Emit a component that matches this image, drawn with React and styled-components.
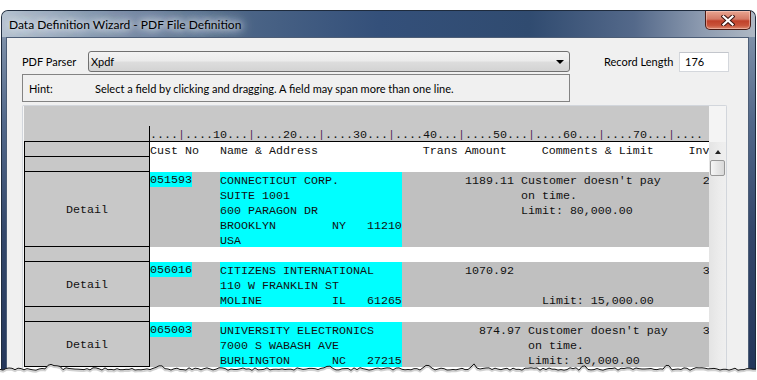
import React from 'react';
import styled, { createGlobalStyle } from 'styled-components';

const GlobalStyle = createGlobalStyle`
  html, body {
    margin: 0;
    padding: 0;
    background: #fff;
    overflow: hidden;
  }
  body {
    font-family: Lato, "Noto Sans", sans-serif;
    font-size: 11px;
    color: #000;
  }
`;

const RULER = '....|....10...|....20...|....30...|....40...|....50...|....60...|....70...|....';
const HEADER = 'Cust No   Name & Address               Trans Amount     Comments & Limit     Inv';

const records = [
  {
    id: '051593',
    name: ['CONNECTICUT CORP.', 'SUITE 1001', '600 PARAGON DR', 'BROOKLYN        NY   11210', 'USA'],
    rest: [
      "         1189.11 Customer doesn't pay      2",
      '                 on time.',
      '                 Limit: 80,000.00',
      '',
      '',
    ],
  },
  {
    id: '056016',
    name: ['CITIZENS INTERNATIONAL', '110 W FRANKLIN ST', 'MOLINE          IL   61265'],
    rest: [
      '         1070.92                           3',
      '',
      '                    Limit: 15,000.00',
    ],
  },
  {
    id: '065003',
    name: ['UNIVERSITY ELECTRONICS', '7000 S WABASH AVE', 'BURLINGTON      NC   27215'],
    rest: [
      "           874.97 Customer doesn't pay     3",
      '                  on time.',
      '                  Limit: 10,000.00',
    ],
  },
];

// jagged torn-paper edge along the bottom
const tornPoints = (() => {
  let s = 11;
  const rand = () => {
    s = (s * 9301 + 49297) % 233280;
    return s / 233280;
  };
  const spikes = [[50, 6], [57, 4], [160, 4], [330, 4], [427, 5], [474, 4], [584, 3], [667, 5]];
  const pts = [];
  for (let x = 0; x <= 757; x += 3) {
    let y = 13 + (rand() - 0.5) * 2.6;
    spikes.forEach(([sx, h]) => {
      const d = Math.abs(x - sx);
      if (d < 5) y -= h * (1 - d / 5);
    });
    pts.push([x, y]);
  }
  return pts;
})();

const TornEdge = () => {
  const line = tornPoints.map(([x, y], i) => `${i ? 'L' : 'M'}${x},${y.toFixed(1)}`).join(' ');
  return (
    <TornSvg width="757" height="24" viewBox="0 0 757 24">
      <path d={`${line} L757,24 L0,24 Z`} fill="#fff" />
      <path d={line} fill="none" stroke="rgba(0,0,0,0.18)" strokeWidth="2" transform="translate(0,1.5)" />
      <path d={line} fill="none" stroke="#111" strokeWidth="1" />
    </TornSvg>
  );
};

const Ruler = () => (
  <RulerText>
    {RULER.split('').map((c, i) => (c === '|' ? <Pipe key={i}>|</Pipe> : c))}
  </RulerText>
);

const App = () => {
  return (
    <Page>
      <GlobalStyle />
      <Window>
        <TitleBar>
          <Title>Data Definition Wizard - PDF File Definition</Title>
          <CloseButton>
            <svg width="14" height="11" viewBox="0 0 14 11">
              <path d="M2.5 1.5 L11.5 9.5 M11.5 1.5 L2.5 9.5" stroke="#3a1410" strokeWidth="4.2" strokeLinecap="square" />
              <path d="M2.5 1.5 L11.5 9.5 M11.5 1.5 L2.5 9.5" stroke="#fff" strokeWidth="2.2" strokeLinecap="square" />
            </svg>
          </CloseButton>
        </TitleBar>
        <Client>
          <TopRow>
            <FieldLabel>PDF Parser</FieldLabel>
            <Combo>
              <span>Xpdf</span>
              <ComboArrow />
            </Combo>
            <RecordLabel>Record Length</RecordLabel>
            <NumberBox>176</NumberBox>
          </TopRow>
          <HintBox>
            <HintLabel>Hint:</HintLabel>
            <span>Select a field by clicking and dragging. A field may span more than one line.</span>
          </HintBox>
          <Panel>
            <Viewport>
              <RulerHead>
                <RulerCorner />
                <Ruler />
              </RulerHead>
              <Row lines={1}>
                <LeftCell />
                <DataCell>
                  <RestField>{HEADER}</RestField>
                </DataCell>
              </Row>
              <Row lines={1}>
                <LeftCell />
                <DataCell />
              </Row>
              {records.map((r, i) => (
                <React.Fragment key={r.id}>
                  {i > 0 && (
                    <Row lines={1}>
                      <LeftCell />
                      <DataCell />
                    </Row>
                  )}
                  <Row lines={r.name.length}>
                    <LeftCell>Detail</LeftCell>
                    <DataCell record>
                      <IdField>
                        <IdMark>{r.id}</IdMark>
                      </IdField>
                      <NameField>{r.name.join('\n')}</NameField>
                      <RestField>{r.rest.join('\n')}</RestField>
                    </DataCell>
                  </Row>
                </React.Fragment>
              ))}
            </Viewport>
            <ScrollCol>
              <ScrollCap />
              <ScrollTrack>
                <ScrollArrow />
                <ScrollThumb />
              </ScrollTrack>
            </ScrollCol>
          </Panel>
        </Client>
      </Window>
      <TornEdge />
    </Page>
  );
};

export default App;

const Page = styled.div`
  position: relative;
  width: 757px;
  height: 380px;
  overflow: hidden;
  padding-top: 10px;
  box-sizing: border-box;
`;

const Window = styled.div`
  margin-left: 1px;
  width: 755px;
  height: 370px;
  box-sizing: border-box;
  border: 1px solid #1e2b3d;
  border-bottom: none;
  border-radius: 7px 7px 0 0;
  background: linear-gradient(180deg, #8b9cb1 0%, #52688a 30%, #33476a 60%, #24365a 100%);
  padding: 0 6px 0 4px;
  display: flex;
  flex-direction: column;
`;

const TitleBar = styled.div`
  height: 26px;
  margin: 0 -6px 0 -4px;
  padding: 0 4px 0 7px;
  border-radius: 6px 6px 0 0;
  display: flex;
  align-items: flex-start;
  justify-content: space-between;
  background: linear-gradient(90deg, #b4c1cf 0%, #8396ae 12%, #4e6788 30%, #34507a 50%, #304b70 70%, #54698a 84%, #8d9bb0 93%, #aeb8c4 100%);
`;

const Title = styled.div`
  line-height: 27px;
  font-size: 12px;
  color: #000;
  text-shadow: 0 0 6px #e8edf2, 0 0 10px #dfe5ec, 0 0 14px #d8dfe8, 0 0 18px #cfd8e2;
`;

const CloseButton = styled.div`
  width: 46px;
  height: 19px;
  box-sizing: border-box;
  border: 1px solid #4a1b14;
  border-top: none;
  border-radius: 0 0 5px 5px;
  background: linear-gradient(180deg, #e8a591 0%, #d47a66 45%, #c0412a 55%, #c8533a 80%, #dc8a70 100%);
  box-shadow: inset 0 0 0 1px rgba(255, 220, 210, 0.45);
  display: flex;
  align-items: center;
  justify-content: center;
`;

const Client = styled.div`
  flex: 1;
  background: #f0f0f0;
  border: 1px solid #4c5d76;
  border-bottom: none;
  padding: 13px 0 0 15px;
  display: flex;
  flex-direction: column;
  min-height: 0;
`;

const TopRow = styled.div`
  display: flex;
  align-items: center;
  height: 21px;
  white-space: nowrap;
`;

const FieldLabel = styled.div`
  width: 66px;
`;

const Combo = styled.div`
  width: 482px;
  height: 21px;
  box-sizing: border-box;
  border: 1px solid #707070;
  border-radius: 3px;
  background: linear-gradient(180deg, #f3f3f3 0%, #ebebeb 48%, #dddddd 52%, #d3d3d3 100%);
  display: flex;
  align-items: center;
  justify-content: space-between;
  padding: 0 5px 0 2px;
`;

const ComboArrow = styled.span`
  width: 0;
  height: 0;
  border-left: 4px solid transparent;
  border-right: 4px solid transparent;
  border-top: 4px solid #000;
  margin-top: 1px;
`;

const RecordLabel = styled.div`
  margin-left: 34px;
  width: 75px;
`;

const NumberBox = styled.div`
  width: 50px;
  height: 20px;
  box-sizing: border-box;
  border: 1px solid #d4d7dc;
  border-top-color: #c3c6cc;
  background: #fff;
  padding-left: 5px;
  line-height: 18px;
`;

const HintBox = styled.div`
  margin-top: 2px;
  width: 548px;
  height: 28px;
  box-sizing: border-box;
  border: 1px solid #838383;
  display: flex;
  align-items: center;
  padding-left: 6px;
  white-space: nowrap;
`;

const HintLabel = styled.span`
  width: 66px;
`;

const Panel = styled.div`
  margin-top: 3px;
  width: 705px;
  flex: 1;
  box-sizing: border-box;
  border: 1px solid #d2d6dc;
  border-bottom: none;
  border-radius: 2px 2px 0 0;
  padding-left: 1px;
  background: #f7f7f7;
  display: flex;
  min-height: 0;
`;

const Viewport = styled.div`
  width: 685px;
  overflow: hidden;
  background: #fff;
  font-family: "Liberation Mono", "Courier New", monospace;
  font-size: 11.67px;
  line-height: 15px;
  color: #111;
`;

const RulerHead = styled.div`
  height: 36px;
  box-sizing: border-box;
  background: #c8c8c8;
  border-bottom: 1px solid #000;
  display: flex;
  align-items: flex-end;
`;

const RulerCorner = styled.div`
  width: 126px;
  height: 15px;
  flex: none;
  box-sizing: border-box;
  border-right: 1px solid #000;
`;

const RulerText = styled.div`
  white-space: pre;
  height: 15px;
  box-sizing: border-box;
  padding-top: 2px;
`;

const Pipe = styled.span`
  color: #5c2c5c;
`;

const Row = styled.div`
  display: flex;
  height: ${({ lines }) => lines * 15}px;
`;

const LeftCell = styled.div`
  width: 126px;
  flex: none;
  box-sizing: border-box;
  border: 1px solid #000;
  border-top: none;
  background: #c8c8c8;
  display: flex;
  align-items: center;
  justify-content: center;
  padding-top: 3px;
`;

const DataCell = styled.div`
  flex: 1;
  display: flex;
  overflow: hidden;
  background: ${({ record }) => (record ? '#c0c0c0' : '#fff')};
`;

const IdField = styled.div`
  width: 70px;
  flex: none;
`;

const IdMark = styled.span`
  display: block;
  width: 42px;
  height: 15px;
  box-sizing: border-box;
  padding-top: 2px;
  line-height: 13px;
  background: #00ffff;
`;

const NameField = styled.div`
  width: 182px;
  flex: none;
  white-space: pre;
  box-sizing: border-box;
  padding-top: 2px;
  background: #00ffff;
`;

const RestField = styled.div`
  flex: 1;
  white-space: pre;
  box-sizing: border-box;
  padding-top: 2px;
`;

const ScrollCol = styled.div`
  width: 17px;
  flex: none;
  display: flex;
  flex-direction: column;
`;

const ScrollCap = styled.div`
  height: 36px;
  background: #f4f4f4;
`;

const ScrollTrack = styled.div`
  flex: 1;
  background: linear-gradient(90deg, #e4e4e4 0%, #ececec 60%, #efefef 100%);
  display: flex;
  flex-direction: column;
  align-items: center;
`;

const ScrollArrow = styled.div`
  margin-top: 8px;
  width: 0;
  height: 0;
  border-left: 3.5px solid transparent;
  border-right: 3.5px solid transparent;
  border-bottom: 4px solid #222;
`;

const ScrollThumb = styled.div`
  margin-top: 6px;
  width: 15px;
  height: 16px;
  box-sizing: border-box;
  border: 1px solid #979797;
  border-radius: 2px;
  background: linear-gradient(90deg, #f6f6f6 0%, #e6e6e6 50%, #d9d9d9 100%);
`;

const TornSvg = styled.svg`
  position: absolute;
  left: 0;
  bottom: 0;
  display: block;
`;
